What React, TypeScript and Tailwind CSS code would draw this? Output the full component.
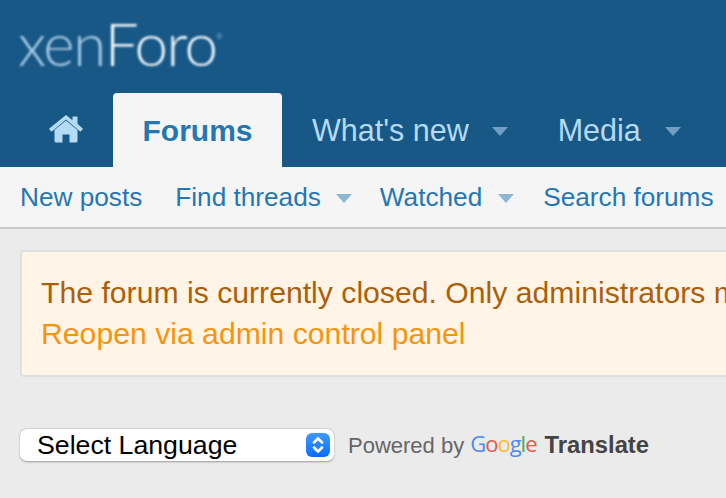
import React from 'react';

const Caret = ({ className }: { className: string }) => (
  <span className={`mt-[2px] h-0 w-0 border-x-[8.5px] border-t-[9px] border-x-transparent ${className}`}></span>
);

const App: React.FC = () => {
  return (
    <div className="h-[498px] w-[726px] overflow-hidden bg-[#ebebeb] font-['Liberation_Sans',Arial,sans-serif]">
      {/* Header */}
      <header className="h-[93px] bg-[#185886] pl-[18px] pt-[8px]">
        <div className="flex items-start blur-[0.8px]">
          <span className="font-['Lato',sans-serif] text-[60px] font-light leading-[70px] tracking-[-1.500px] text-[#a9cde6]">xen</span>
          <span className="font-['Lato',sans-serif] text-[60px] font-light leading-[70px] tracking-[-1.500px] text-[#f2f8fc]">Foro</span>
          <span className="mt-[25px] text-[8px] leading-none text-[#8fb8d4]">®</span>
        </div>
      </header>

      {/* Main nav */}
      <nav className="flex h-[74px] items-stretch overflow-hidden whitespace-nowrap bg-[#185886] text-[30.500px] text-[#b5daf4]">
        <div className="flex w-[113px] items-center justify-end pb-[2px] pr-[30px]">
          <svg viewBox="0 0 34 28" className="h-[28px] w-[34px]" fill="#b5daf4">
            <path d="M17 5.500 5.500 15v11a1.400 1.400 0 0 0 1.400 1.400h6.600v-8h7v8h6.600a1.400 1.400 0 0 0 1.400-1.400V15z" />
            <path d="M17 0 .6 13.200a1 1 0 0 0-.1 1.400l1.300 1.500a1 1 0 0 0 1.400.1L17 4.400l13.800 11.800a1 1 0 0 0 1.400-.1l1.300-1.500a1 1 0 0 0-.1-1.400L28.500 8.700V2.300a.8.800 0 0 0-.8-.8h-3.400a.8.800 0 0 0-.8.800v3z" />
          </svg>
        </div>
        <div className="flex w-[169px] items-center justify-center rounded-t-[4px] bg-[#f5f5f5] text-[30px] font-bold text-[#2577b1]">Forums</div>
        <div className="flex items-center pl-[30px]">
          <span className="mt-[2px]">What's new</span>
          <Caret className="ml-[23px] border-t-[#6f9fc2]" />
        </div>
        <div className="flex items-center pl-[50px]">
          <span className="mt-[2px]">Media</span>
          <Caret className="ml-[24px] border-t-[#6f9fc2]" />
        </div>
      </nav>

      {/* Sub nav */}
      <nav className="flex h-[62px] items-center whitespace-nowrap border-b-2 border-[#cbcbcb] bg-[#f5f5f5] pl-[20px] pt-[1px] text-[26.200px] text-[#2577b1]">
        <span>New posts</span>
        <span className="ml-[33px]">Find threads</span>
        <Caret className="ml-[15px] border-t-[#8cb6d4]" />
        <span className="ml-[28px]">Watched</span>
        <Caret className="ml-[16px] border-t-[#8cb6d4]" />
        <span className="ml-[29px]">Search forums</span>
      </nav>

      {/* Notice */}
      <div className="mt-[21px] ml-[20px] h-[127px] w-[900px] whitespace-nowrap rounded-[4px] border-2 border-[#dfdfdf] bg-[#fff4e5] pl-[19px] pt-[20px] text-[30.200px] leading-[41px]">
        <div className="text-[#ac5f0b]">The forum is currently closed. Only administrators may access it.</div>
        <div className="text-[#f5940f]">Reopen via admin control panel</div>
      </div>

      {/* Translate */}
      <div className="mt-[50px] flex items-center pl-[20px]">
        <div className="flex h-[32px] w-[314px] items-center justify-between rounded-[7px] bg-white pl-[17px] pr-[4px] text-[26.700px] text-black shadow-[0_0.5px_2px_rgba(0,0,0,0.35)]">
          <span>Select Language</span>
          <span className="flex h-[24px] w-[24px] items-center justify-center rounded-[6px] bg-gradient-to-b from-[#3d9bff] to-[#0a6cff]">
            <svg viewBox="0 0 24 24" className="h-[24px] w-[24px]" fill="none" stroke="#fff" strokeWidth="2.600" strokeLinecap="round" strokeLinejoin="round">
              <path d="M8 9.500 12 5.500l4 4M8 14.500l4 4 4-4" />
            </svg>
          </span>
        </div>
        <span className="ml-[14px] mt-[2px] text-[22px] text-[#666666]">Powered by</span>
        <span className="mb-[3px] ml-[6px] flex items-baseline font-['Open_Sans',sans-serif] text-[22px] font-medium leading-none tracking-[-1px]">
          <span className="text-[#4a8cf0]">G</span>
          <span className="text-[#e8554a]">o</span>
          <span className="text-[#f6bd2d]">o</span>
          <span className="text-[#4a8cf0]">g</span>
          <span className="text-[#3fae5a]">l</span>
          <span className="text-[#e8554a]">e</span>
        </span>
        <span className="ml-[8px] text-[23.800px] font-bold text-[#444444]">Translate</span>
      </div>
    </div>
  );
};

export default App;
